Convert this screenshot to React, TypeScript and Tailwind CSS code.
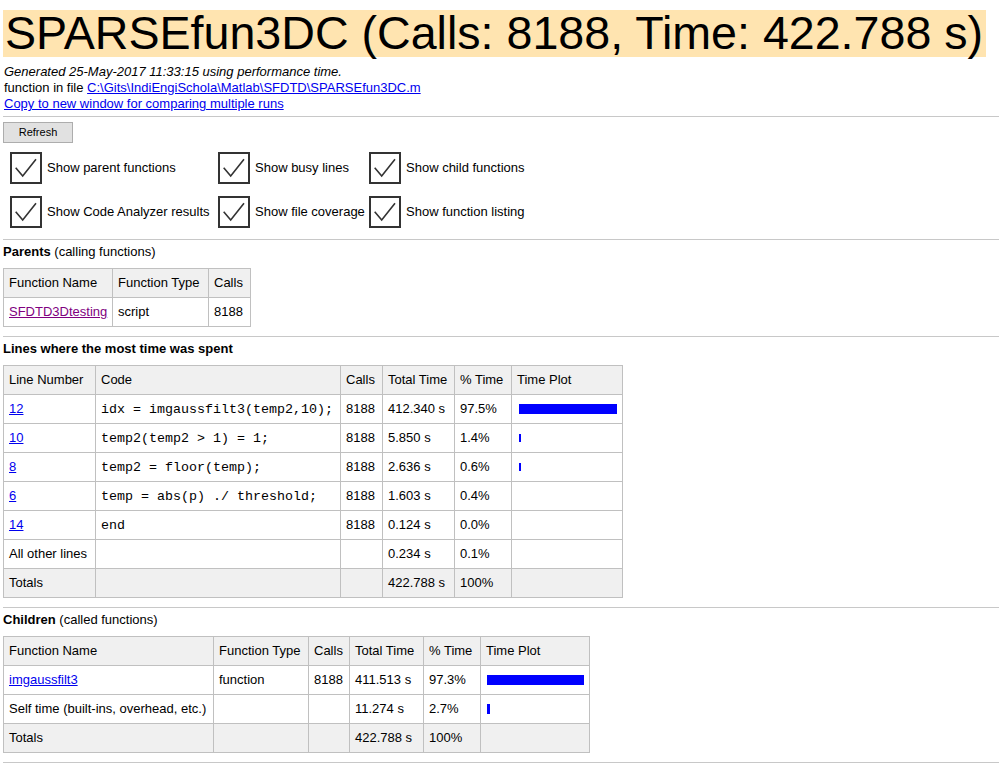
import React from "react";

const Check = ({ label }: { label: string }) => (
  <div className="flex items-center gap-[5px] h-[32px]">
    <div className="relative w-[32px] h-[32px] border-2 border-[#333333] shrink-0">
      <svg className="absolute left-0 top-0" width="28" height="28" viewBox="0 0 28 28">
        <path d="M3.7 13.7 L10.7 22 L24 5.3" stroke="#333333" strokeWidth="1.6" fill="none" />
      </svg>
    </div>
    <span className="whitespace-nowrap">{label}</span>
  </div>
);

const Hr = () => <div className="h-px bg-[#c8c8c8] ml-[3px]" />;

type Cell = React.ReactNode;

const Table = ({ widths, head, rows, shadeLast }: { widths: number[]; head: string[]; rows: Cell[][]; shadeLast?: boolean }) => (
  <table className="border-collapse table-fixed ml-[3px]" style={{ width: widths.reduce((a, b) => a + b, 0) }}>
    <colgroup>
      {widths.map((w, i) => (
        <col key={i} style={{ width: w }} />
      ))}
    </colgroup>
    <thead>
      <tr className="bg-[#f0f0f0]">
        {head.map((h, i) => (
          <td key={i} className="border border-[#c0c0c0] h-[29px] px-[5px] font-normal text-left whitespace-nowrap">
            {h}
          </td>
        ))}
      </tr>
    </thead>
    <tbody>
      {rows.map((r, ri) => (
        <tr key={ri} className={shadeLast && ri === rows.length - 1 ? "bg-[#f0f0f0]" : ""}>
          {r.map((c, ci) => (
            <td key={ci} className="border border-[#c0c0c0] h-[29px] px-[5px] whitespace-nowrap">
              {c}
            </td>
          ))}
        </tr>
      ))}
    </tbody>
  </table>
);

const A = ({ children, purple }: { children: React.ReactNode; purple?: boolean }) => (
  <a href="#" className={purple ? "text-[#800080] underline" : "text-[#0000ee] underline"}>
    {children}
  </a>
);

const Code = ({ children }: { children: string }) => (
  <span className="font-['Liberation_Mono','Courier_New',monospace] text-[13.33px] whitespace-pre">{children}</span>
);

const Bar = ({ w, h, ml }: { w: number; h: number; ml: number }) => (
  <div className="bg-[#0000ff]" style={{ width: w, height: h, marginLeft: ml }} />
);

export default function App() {
  return (
    <div className="font-['Liberation_Sans',Arial,sans-serif] text-[13px] leading-[16px] text-black bg-white w-[999px] h-[765px] overflow-hidden">
      <div className="pt-[10px] pl-[3px]">
        <div className="inline-block bg-[#ffe4b0] text-[46.6px] leading-[47px] h-[47px] pl-[2px] pr-[3px] whitespace-nowrap">
          SPARSEfun3DC (Calls: 8188, Time: 422.788 s)
        </div>
      </div>
      <div className="mt-[7px] pl-[4px]">
        <div className="italic">Generated 25-May-2017 11:33:15 using performance time.</div>
        <div>
          function in file <A>C:\Gits\IndiEngiSchola\Matlab\SFDTD\SPARSEfun3DC.m</A>
        </div>
        <div>
          <A>Copy to new window for comparing multiple runs</A>
        </div>
      </div>
      <div className="mt-[4px]">
        <Hr />
      </div>
      <div className="mt-[5px] ml-[3px]">
        <button className="w-[70px] h-[21px] bg-[#e1e1e1] border border-[#adadad] text-[11px] leading-[19px]">Refresh</button>
      </div>
      <div className="mt-[9px] ml-[10px] grid grid-cols-[208px_151px_auto] gap-y-[12px]">
        <Check label="Show parent functions" />
        <Check label="Show busy lines" />
        <Check label="Show child functions" />
        <Check label="Show Code Analyzer results" />
        <Check label="Show file coverage" />
        <Check label="Show function listing" />
      </div>
      <div className="mt-[11px]">
        <Hr />
      </div>
      <div className="mt-[4px] pl-[3px]">
        <b>Parents</b> (calling functions)
      </div>
      <div className="mt-[8px]">
        <Table
          widths={[109, 96, 42]}
          head={["Function Name", "Function Type", "Calls"]}
          rows={[[<A purple>SFDTD3Dtesting</A>, "script", "8188"]]}
        />
      </div>
      <div className="mt-[9px]">
        <Hr />
      </div>
      <div className="mt-[4px] pl-[3px]">
        <b>Lines where the most time was spent</b>
      </div>
      <div className="mt-[8px]">
        <Table
          widths={[92, 245, 42, 72, 57, 111]}
          head={["Line Number", "Code", "Calls", "Total Time", "% Time", "Time Plot"]}
          shadeLast
          rows={[
            [<A>12</A>, <Code>idx = imgaussfilt3(temp2,10);</Code>, "8188", "412.340 s", "97.5%", <Bar w={98} h={10} ml={2} />],
            [<A>10</A>, <Code>temp2(temp2 &gt; 1) = 1;</Code>, "8188", "5.850 s", "1.4%", <Bar w={2} h={8} ml={2} />],
            [<A>8</A>, <Code>temp2 = floor(temp);</Code>, "8188", "2.636 s", "0.6%", <Bar w={2} h={8} ml={2} />],
            [<A>6</A>, <Code>temp = abs(p) ./ threshold;</Code>, "8188", "1.603 s", "0.4%", ""],
            [<A>14</A>, <Code>end</Code>, "8188", "0.124 s", "0.0%", ""],
            ["All other lines", "", "", "0.234 s", "0.1%", ""],
            ["Totals", "", "", "422.788 s", "100%", ""],
          ]}
        />
      </div>
      <div className="mt-[9px]">
        <Hr />
      </div>
      <div className="mt-[4px] pl-[3px]">
        <b>Children</b> (called functions)
      </div>
      <div className="mt-[8px]">
        <Table
          widths={[210, 95, 41, 74, 57, 109]}
          head={["Function Name", "Function Type", "Calls", "Total Time", "% Time", "Time Plot"]}
          shadeLast
          rows={[
            [<A>imgaussfilt3</A>, "function", "8188", "411.513 s", "97.3%", <Bar w={97} h={10} ml={1} />],
            ["Self time (built-ins, overhead, etc.)", "", "", "11.274 s", "2.7%", <Bar w={3} h={10} ml={1} />],
            ["Totals", "", "", "422.788 s", "100%", ""],
          ]}
        />
      </div>
      <div className="mt-[9px]">
        <Hr />
      </div>
    </div>
  );
}
